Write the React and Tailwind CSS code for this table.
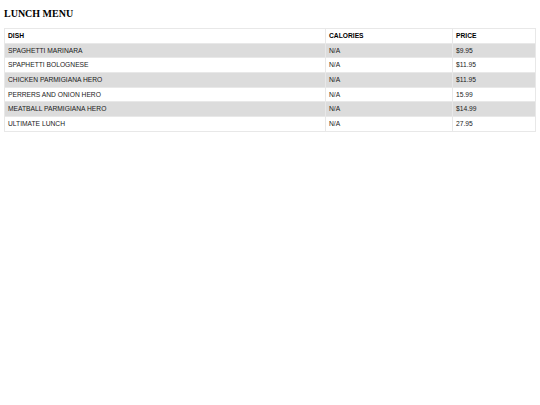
const rows = [
  { dish: 'SPAGHETTI MARINARA', cal: 'N/A', price: '$9.95' },
  { dish: 'SPAPHETTI BOLOGNESE', cal: 'N/A', price: '$11.95' },
  { dish: 'CHICKEN PARMIGIANA HERO', cal: 'N/A', price: '$11.95' },
  { dish: 'PERRERS AND ONION HERO', cal: 'N/A', price: '15.99' },
  { dish: 'MEATBALL PARMIGIANA HERO', cal: 'N/A', price: '$14.99' },
  { dish: 'ULTIMATE LUNCH', cal: 'N/A', price: '27.95' },
];

export default function App() {
  return (
    <div className="w-[540px] h-[405px] bg-white px-1 pt-[7px]">
      <h1 className="font-['Liberation_Serif',serif] font-bold text-[10px] leading-[14px] text-black">LUNCH MENU</h1>
      <table className="mt-[7px] w-[532px] border-collapse font-['Liberation_Sans',Arial,sans-serif] text-[6.7px] text-[#1a1a1a]">
        <thead>
          <tr className="h-[14.7px]">
            <th className="border border-[#e8e8e8] px-[3px] text-left font-bold text-black w-[321px]">DISH</th>
            <th className="border border-[#e8e8e8] px-[3px] text-left font-bold text-black w-[127px]">CALORIES</th>
            <th className="border border-[#e8e8e8] px-[3px] text-left font-bold text-black">PRICE</th>
          </tr>
        </thead>
        <tbody>
          {rows.map((r, i) => (
            <tr key={i} className={i % 2 === 0 ? 'h-[14.7px] bg-[#dcdcdc]' : 'h-[14.7px] bg-white'}>
              <td className="border border-[#e8e8e8] px-[3px]">{r.dish}</td>
              <td className="border border-[#e8e8e8] px-[3px]">{r.cal}</td>
              <td className="border border-[#e8e8e8] px-[3px]">{r.price}</td>
            </tr>
          ))}
        </tbody>
      </table>
    </div>
  );
}
